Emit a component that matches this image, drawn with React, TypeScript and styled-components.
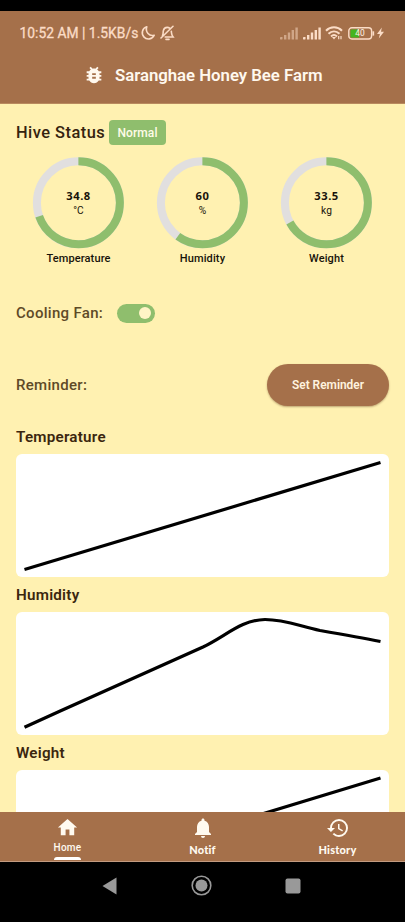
import React from "react";
import styled, { createGlobalStyle } from "styled-components";
import { MdBugReport, MdHistory, MdHome, MdNotifications } from "react-icons/md";

const brown = "#a5704a";
const cream = "#fff1b1";
const green = "#8fbe6d";

const GlobalStyle = createGlobalStyle`
  * { box-sizing: border-box; }
  body { margin: 0; background: #000; font-family: Roboto, sans-serif; }
  svg { display: block; flex: none; }
`;

const Screen = styled.div`
  width: 405px;
  height: 922px;
  padding-top: 11px;
  display: flex;
  flex-direction: column;
  background: #000;
  overflow: hidden;
`;

const Header = styled.header`
  height: 93px;
  flex: none;
  background: ${brown};
  color: #fff8ee;
  border-bottom: 1px solid #b98a5e;
`;

const StatusBar = styled.div`
  height: 44px;
  padding: 0 21.5px 0 19.5px;
  display: flex;
  align-items: center;
  color: #fbdcc6;
`;

const Clock = styled.span`
  font-size: 13.8px;
  letter-spacing: 0.03px;
  line-height: 18px;
  white-space: nowrap;
  margin-right: 2px;
  -webkit-text-stroke: 0.3px currentColor;
`;

const StatusIcons = styled.div`
  display: flex;
  align-items: center;
  margin-left: auto;
`;

const Spacer = styled.span<{ $w: number }>`
  width: ${(p) => p.$w}px;
`;

const TitleBar = styled.div`
  height: 40px;
  padding-left: 83px;
  display: flex;
  align-items: center;
  gap: 10px;
`;

const Title = styled.h1`
  margin: 0;
  font-size: 16.8px;
  font-weight: 600;
  line-height: 22px;
  letter-spacing: -0.03px;
  white-space: nowrap;
`;

const Content = styled.main`
  height: 708px;
  flex: none;
  padding: 16px 16px 0;
  background: ${cream};
  overflow: hidden;
`;

const StatusRow = styled.div`
  height: 26px;
  display: flex;
  align-items: flex-start;
  gap: 4px;
`;

const StatusTitle = styled.h2`
  margin: 0;
  width: 89px;
  font-size: 16.4px;
  font-weight: 500;
  line-height: 26px;
  letter-spacing: 0.48px;
  white-space: nowrap;
  color: #35230f;
`;

const Badge = styled.span`
  width: 57px;
  height: 25px;
  border-radius: 4px;
  background: ${green};
  color: #fffbe8;
  font-size: 12px;
  font-weight: 500;
  letter-spacing: 0.1px;
  line-height: 26px;
  text-align: center;
`;

const Gauges = styled.section`
  display: grid;
  grid-template-columns: repeat(3, 124px);
  margin-top: 11px;
`;

const GaugeItem = styled.div`
  display: flex;
  flex-direction: column;
  align-items: center;
`;

const Dial = styled.div`
  display: grid;
  width: 92px;
  height: 92px;
  & > * { grid-area: 1 / 1; }
`;

const Reading = styled.div`
  display: flex;
  flex-direction: column;
  align-items: center;
  padding: 32px 0 0 1px;
  color: #17130a;
`;

const Value = styled.span`
  font-family: "Noto Sans", sans-serif;
  font-size: 11.2px;
  font-weight: 700;
  line-height: 14px;
  letter-spacing: 0.5px;
`;

const Unit = styled.span`
  font-size: 10.2px;
  line-height: 14px;
  padding-top: 1px;
`;

const GaugeLabel = styled.span`
  margin-top: 1px;
  padding-left: 1px;
  font-size: 11px;
  font-weight: 500;
  line-height: 17px;
  letter-spacing: 0.12px;
  color: #17130a;
`;

const ControlRow = styled.div<{ $height: number; $top: number; $spread?: boolean }>`
  height: ${(p) => p.$height}px;
  margin-top: ${(p) => p.$top}px;
  display: flex;
  align-items: center;
  justify-content: ${(p) => (p.$spread ? "space-between" : "flex-start")};
  gap: 14px;
`;

const ControlLabel = styled.span`
  font-size: 15px;
  font-weight: 500;
  letter-spacing: 0.3px;
  color: #5e4a27;
  white-space: nowrap;
`;

const Toggle = styled.button`
  width: 38px;
  height: 19px;
  border: 0;
  border-radius: 10px;
  padding: 0 4px;
  display: flex;
  align-items: center;
  justify-content: flex-end;
  background: ${green};
`;

const Knob = styled.span`
  width: 12px;
  height: 12px;
  border-radius: 50%;
  background: #fff4c6;
`;

const ReminderButton = styled.button`
  width: 122px;
  height: 42px;
  border: 0;
  border-radius: 21px;
  background: ${brown};
  color: #fff3df;
  font-family: Roboto, sans-serif;
  font-size: 11.9px;
  font-weight: 600;
  padding: 0;
  box-shadow: 0 1px 2px rgba(90, 50, 20, 0.4);
`;

const Charts = styled.div`
  margin-top: 13px;
`;

const ChartBlock = styled.section`
  height: 158px;
`;

const ChartTitle = styled.h3`
  margin: 0;
  height: 35px;
  font-size: 15.2px;
  font-weight: 600;
  line-height: 36px;
  letter-spacing: 0.24px;
  color: #3b260e;
`;

const ChartCard = styled.div`
  width: 373px;
  height: 123px;
  border-radius: 6px;
  background: #fff;
`;

const BottomNav = styled.nav`
  height: 50px;
  flex: none;
  display: grid;
  grid-template-columns: repeat(3, 1fr);
  background: ${brown};
  border-bottom: 1px solid #c39b80;
`;

const Tab = styled.a<{ $active?: boolean }>`
  display: flex;
  flex-direction: column;
  align-items: center;
  padding-top: 4px;
  color: #fffaf0;
  font-family: ${(p) => (p.$active ? "Roboto" : "Lato")}, sans-serif;
  font-size: ${(p) => (p.$active ? 10 : 11)}px;
  font-weight: ${(p) => (p.$active ? 500 : 900)};
  letter-spacing: ${(p) => (p.$active ? 0.25 : 0.2)}px;
`;

const TabText = styled.span<{ $active?: boolean }>`
  height: 16px;
  line-height: 16px;
  margin-top: ${(p) => (p.$active ? 1 : 2)}px;
`;

const ActiveMark = styled.span`
  width: 27px;
  height: 3px;
  margin-top: 1px;
  border-radius: 3px 3px 0 0;
  background: #fff;
`;

const SystemNav = styled.footer`
  height: 47px;
  padding-left: 102px;
  display: flex;
  align-items: center;
`;

function SignalIcon({ faded = false }: { faded?: boolean }) {
  return (
    <svg width="18" height="13" viewBox="0 0 18 13" fill="currentColor" opacity={faded ? 0.5 : 1}>
      <rect x="0" y="10" width="2.5" height="2.5" rx="0.4" />
      <rect x="4" y="8" width="2.4" height="4.5" />
      <rect x="7.8" y="5.5" width="2.4" height="7" />
      <rect x="11.6" y="3" width="2.4" height="9.5" />
      <rect x="15.4" y="0.5" width="2.4" height="12" />
    </svg>
  );
}

function Gauge({ value, unit, label, max }: { value: string; unit: string; label: string; max: number }) {
  const length = 2 * Math.PI * 41.5;
  const filled = (Number(value) / max) * length;
  return (
    <GaugeItem>
      <Dial>
        <svg width="92" height="92" viewBox="0 0 92 92" fill="none" strokeWidth="8">
          <circle cx="46.4" cy="45.8" r="41.5" stroke="#e1dfdf" />
          <circle
            cx="46.4" cy="45.8" r="41.5" stroke={green}
            strokeDasharray={`${filled} ${length}`} transform="rotate(-90 46.4 45.8)"
          />
        </svg>
        <Reading>
          <Value>{value}</Value>
          <Unit>{unit}</Unit>
        </Reading>
      </Dial>
      <GaugeLabel>{label}</GaugeLabel>
    </GaugeItem>
  );
}

function Chart({ title, path }: { title: string; path: string }) {
  return (
    <ChartBlock>
      <ChartTitle>{title}</ChartTitle>
      <ChartCard>
        <svg width="373" height="123" viewBox="0 0 373 123">
          <path d={path} fill="none" stroke="#000" strokeWidth="3.2" />
        </svg>
      </ChartCard>
    </ChartBlock>
  );
}

export default function App() {
  return (
    <Screen>
      <GlobalStyle />
      <Header>
        <StatusBar>
          <Clock>10:52 AM | 1.5KB/s</Clock>
          <svg width="16" height="16" viewBox="0 0 16 16" fill="none" stroke="currentColor" strokeWidth="1.6" strokeLinejoin="round">
            <path d="M6.8 1.8A6.2 6.2 0 1 0 14.2 10.2C9.4 11.8 5 7 6.8 1.8Z" />
          </svg>
          <Spacer $w={3.5} />
          <svg width="15" height="16" viewBox="0 0 15 16" fill="none" stroke="currentColor" strokeWidth="1.6" strokeLinecap="round">
            <path d="M2.5 10.5C3.4 9.2 3 7.7 3.3 5.8C3.8 3.5 5.3 2.4 7.2 2.4C8.2 2.4 9 2.7 9.6 3.2M11.3 6.2C11.6 8.7 11.2 9.4 13.1 12H5.2M1 13L13 1.3M6 14.4H9" />
          </svg>
          <StatusIcons>
            <SignalIcon faded />
            <Spacer $w={4.5} />
            <SignalIcon />
            <Spacer $w={4.5} />
            <svg width="18" height="14" viewBox="0 0 18 14" fill="none" stroke="currentColor" strokeWidth="2">
              <path d="M1 4.8C5.5 .2 12.5 .2 17 4.8M3.5 7.8C6.8 4.6 11.2 4.6 14.5 7.8M6 10.4C7.8 8.8 10.2 8.8 12 10.4" />
              <path d="M7 11L9 13.4L11 11Z" fill="currentColor" stroke="none" />
              <path d="M13.7 10V13.2M16 10V13.2" strokeWidth="1.2" />
            </svg>
            <Spacer $w={4.5} />
            <svg width="27" height="13" viewBox="0 0 27 13">
              <rect x="0.8" y="0.8" width="22.8" height="11.2" rx="3" fill="none" stroke="currentColor" strokeWidth="1.4" />
              <path d="M3.7 2.5H11V10.5H3.7Q2.5 10.5 2.5 9.2V3.8Q2.5 2.5 3.7 2.5Z" fill="#43b51f" />
              <path d="M25.3 4.3V8.6" stroke="currentColor" strokeWidth="1.7" />
              <text x="12" y="9.3" textAnchor="middle" fill="#fff3e4" fontFamily="Roboto, sans-serif" fontSize="8.4" fontWeight="400">40</text>
            </svg>
            <Spacer $w={2} />
            <svg width="7" height="12" viewBox="0 0 7 12" fill="currentColor">
              <path d="M4.8 0.5L0 7H2.9L1.8 11.5L7 4.8H4Z" />
            </svg>
          </StatusIcons>
        </StatusBar>
        <TitleBar>
          <MdBugReport size={22} />
          <Title>Saranghae Honey Bee Farm</Title>
        </TitleBar>
      </Header>

      <Content>
        <StatusRow>
          <StatusTitle>Hive Status</StatusTitle>
          <Badge>Normal</Badge>
        </StatusRow>
        <Gauges>
          <Gauge value="34.8" unit="°C" label="Temperature" max={50} />
          <Gauge value="60" unit="%" label="Humidity" max={100} />
          <Gauge value="33.5" unit="kg" label="Weight" max={50} />
        </Gauges>
        <ControlRow $height={20} $top={36}>
          <ControlLabel>Cooling Fan:</ControlLabel>
          <Toggle aria-label="Cooling fan"><Knob /></Toggle>
        </ControlRow>
        <ControlRow $height={42} $top={41} $spread>
          <ControlLabel>Reminder:</ControlLabel>
          <ReminderButton>Set Reminder</ReminderButton>
        </ControlRow>
        <Charts>
          <Chart title="Temperature" path="M8.5 115.5L364.5 8.5" />
          <Chart title="Humidity" path="M8.5 115.3C68 88 128 61 187 35C210 24 225 8 249 7.5C269 7.5 283 14 304 18.5C324 22 344 25.5 364.5 29.5" />
          <Chart title="Weight" path="M8.5 115.5L246 44L364.5 8" />
        </Charts>
      </Content>

      <BottomNav>
        <Tab $active>
          <MdHome size={23} />
          <TabText $active>Home</TabText>
          <ActiveMark />
        </Tab>
        <Tab>
          <MdNotifications size={24} />
          <TabText>Notif</TabText>
        </Tab>
        <Tab>
          <MdHistory size={24} />
          <TabText>History</TabText>
        </Tab>
      </BottomNav>
      <SystemNav>
        <svg width="15" height="18" viewBox="0 0 15 18" fill="#999">
          <path d="M0.5 9L14.5 0.5V17.5Z" />
        </svg>
        <Spacer $w={73.5} />
        <svg width="21" height="21" viewBox="0 0 21 21">
          <circle cx="10.5" cy="10.5" r="9.3" fill="none" stroke="#999" strokeWidth="1.6" />
          <circle cx="10.5" cy="10.5" r="6" fill="#999" />
        </svg>
        <Spacer $w={73.5} />
        <svg width="16" height="16" viewBox="0 0 16 16">
          <rect x="0.5" y="0.5" width="15" height="15" rx="2" fill="#999" />
        </svg>
      </SystemNav>
    </Screen>
  );
}
